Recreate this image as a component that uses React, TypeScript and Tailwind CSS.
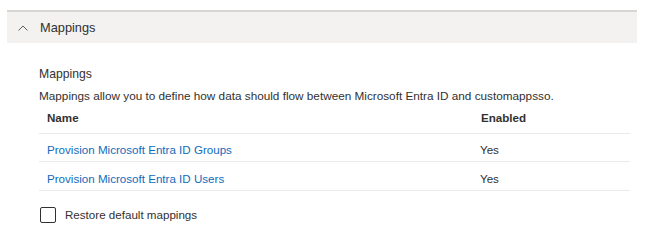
import React from "react";

const rows = [
  { name: "Provision Microsoft Entra ID Groups", enabled: "Yes" },
  { name: "Provision Microsoft Entra ID Users", enabled: "Yes" },
];

export default function App() {
  return (
    <div className="h-[244px] w-[658px] bg-white pt-[10px] text-[#323130] [font-family:'Liberation_Sans',Arial,sans-serif]">
      <div className="ml-[7px] mr-[21px] flex h-[33px] items-center border-t-2 border-[#d8d6d4] bg-[#f3f2f1] pl-[10px]">
        <svg width="12" height="12" viewBox="0 0 12 12" className="mr-[11px]">
          <path d="M1.5 8.5 L6 4 L10.5 8.5" fill="none" stroke="#605e5c" strokeWidth="1" />
        </svg>
        <span className="text-[12.8px]">Mappings</span>
      </div>

      <div className="ml-[39px] mr-[28px] mt-[21px]">
        <div className="text-[12.2px] leading-[20px]">Mappings</div>
        <div className="mt-[2px] text-[11.75px] leading-[20px]">
          Mappings allow you to define how data should flow between Microsoft Entra ID and customappsso.
        </div>

        <div className="grid h-[28px] grid-cols-[434px_1fr] items-center border-b border-[#edebe9] pb-[4px] text-[11.6px] font-bold">
          <div className="pl-[8px]">Name</div>
          <div className="pl-[8px]">Enabled</div>
        </div>
        {rows.map((r, i) => (
          <div
            key={r.name}
            className={`grid grid-cols-[434px_1fr] items-center border-b border-[#edebe9] pt-[5px] text-[11.6px] ${i === 0 ? "h-[28px]" : "h-[29px]"}`}
          >
            <div className="pl-[8px] text-[#0f6cbd]">{r.name}</div>
            <div className="pl-[7px]">{r.enabled}</div>
          </div>
        ))}

        <label className="mt-[15px] flex items-center gap-[9px] pl-[1px] text-[11.6px]">
          <span className="h-[16px] w-[16px] rounded-[2px] border border-[#323130]" />
          <span>Restore default mappings</span>
        </label>
      </div>
    </div>
  );
}
